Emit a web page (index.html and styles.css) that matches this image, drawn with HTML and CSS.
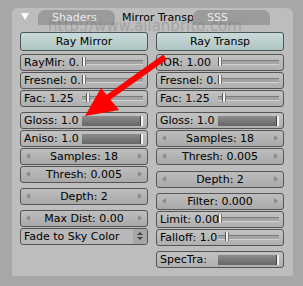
FILE: index.html
```html
<!DOCTYPE html>
<html>
<head>
    <title>Mirror Transp</title>
    <meta charset="UTF-8"/>
    <link rel="stylesheet" href="styles.css">
</head>
<body>
    <div class="panel">
        <div class="tabs">
            <span class="tri"></span>
            <div class="tab">Shaders</div>
            <div class="tab active">Mirror Transp</div>
            <div class="tab">SSS</div>
        </div>
        <div class="watermark">http://www.allanbrito.com</div>

        <div class="cols">
            <!-- coluna esquerda -->
            <div class="col">
                <div class="toggle">Ray Mirror</div>
                <div class="group">
                    <div class="row slider"><span class="lbl">RayMir: 0.</span><span class="track"><i class="knob" style="left:0px"></i></span></div>
                    <div class="row slider"><span class="lbl">Fresnel: 0.</span><span class="track"><i class="knob" style="left:0px"></i></span></div>
                    <div class="row slider"><span class="lbl">Fac: 1.25</span><span class="track"><i class="knob" style="left:4px"></i></span></div>
                </div>
                <div class="group">
                    <div class="row slider"><span class="lbl">Gloss: 1.0</span><span class="fill"><i class="end"></i></span></div>
                    <div class="row slider"><span class="lbl">Aniso: 1.0</span><span class="fill"><i class="end"></i></span></div>
                    <div class="row num">Samples: 18</div>
                    <div class="row num">Thresh: 0.005</div>
                </div>
                <div class="group">
                    <div class="row num">Depth: 2</div>
                </div>
                <div class="group">
                    <div class="row num">Max Dist: 0.00</div>
                    <div class="row menu"><span class="lbl">Fade to Sky Color</span><span class="updown"></span></div>
                </div>
            </div>

            <!-- coluna direita -->
            <div class="col">
                <div class="toggle">Ray Transp</div>
                <div class="group">
                    <div class="row slider"><span class="lbl">IOR: 1.00</span><span class="track"><i class="knob" style="left:0px"></i></span></div>
                    <div class="row slider"><span class="lbl">Fresnel: 0.</span><span class="track"><i class="knob" style="left:0px"></i></span></div>
                    <div class="row slider"><span class="lbl">Fac: 1.25</span><span class="track"><i class="knob" style="left:4px"></i></span></div>
                </div>
                <div class="group">
                    <div class="row slider"><span class="lbl">Gloss: 1.0</span><span class="fill"><i class="end"></i></span></div>
                    <div class="row num">Samples: 18</div>
                    <div class="row num">Thresh: 0.005</div>
                </div>
                <div class="group wide">
                    <div class="row num">Depth: 2</div>
                </div>
                <div class="group">
                    <div class="row num">Filter: 0.000</div>
                    <div class="row slider"><span class="lbl">Limit: 0.00</span><span class="track"><i class="knob" style="left:0px"></i></span></div>
                    <div class="row slider"><span class="lbl">Falloff: 1.0</span><span class="track"><i class="knob" style="left:7px"></i></span></div>
                </div>
                <div class="group">
                    <div class="row slider"><span class="lbl">SpecTra:</span><span class="fill"><i class="end"></i></span></div>
                </div>
            </div>
        </div>
    </div>

    <svg class="arrow" width="303" height="286" viewBox="0 0 303 286">
        <line x1="165" y1="57" x2="106" y2="99" stroke="#ff0000" stroke-width="6"/>
        <polygon points="85,116 101,88 119,110" fill="#ff0000"/>
    </svg>
</body>
</html>
```

FILE: styles.css
```css
body {
    margin: 0;
    background-color: #a7a7a7;
    font-family: "DejaVu Sans", sans-serif;
    font-size: 11px;
    color: #000;
}
.panel {
    position: relative;
    margin: 8px 0 0 12px;
    width: 281px;
    height: 268px;
    background-color: #bdbdbd;
    border-radius: 6px 6px 0 0;
}
.tabs {
    display: flex;
    align-items: flex-end;
    height: 17px;
}
.tri {
    align-self: flex-start;
    margin: 5px 9px 0 9px;
    width: 0;
    height: 0;
    border-left: 4px solid transparent;
    border-right: 4px solid transparent;
    border-top: 7px solid #ffffff;
}
.tab {
    width: 77px;
    height: 15px;
    box-sizing: border-box;
    padding-left: 14px;
    line-height: 15px;
    background-color: #9b9b9b;
    color: #ececec;
    border-radius: 7px 7px 0 0;
    white-space: nowrap;
    overflow: hidden;
}
.tab.active {
    width: 78px;
    height: 17px;
    padding-left: 7px;
    line-height: 19px;
    background-color: #bdbdbd;
    color: #000;
}
.watermark {
    position: absolute;
    left: 36px;
    top: 9px;
    font-size: 15px;
    color: rgba(110, 110, 110, 0.35);
    white-space: nowrap;
}
.cols {
    position: relative;
    z-index: 1;
    display: flex;
    gap: 8px;
    padding: 7px 0 0 8px;
}
.col {
    width: 128px;
    display: flex;
    flex-direction: column;
}
.toggle {
    height: 19px;
    box-sizing: border-box;
    border: 1px solid #4b5656;
    border-radius: 3px;
    background: linear-gradient(#c8dada, #b1c5c5);
    text-align: center;
    line-height: 17px;
    margin-bottom: 3px;
}
.group {
    display: flex;
    flex-direction: column;
    gap: 1px;
    margin-bottom: 5px;
}
.group.wide {
    margin-top: 1px;
}
.row {
    position: relative;
    height: 17px;
    box-sizing: border-box;
    border: 1px solid #555555;
    border-radius: 3px;
    background: linear-gradient(#c2c2c2, #afafaf);
    line-height: 15px;
    white-space: nowrap;
}
.slider {
    display: flex;
    align-items: center;
}
.lbl {
    padding-left: 3px;
    width: 58px;
    flex: none;
}
.track {
    position: relative;
    flex: 1;
    margin-right: 4px;
    height: 3px;
    background-color: #a3a3a3;
    border-top: 1px solid #7c7c7c;
    border-bottom: 1px solid #d2d2d2;
}
.knob {
    position: absolute;
    top: -4px;
    width: 2px;
    height: 9px;
    background-color: #f0f0f0;
    border-left: 1px solid #555555;
    border-right: 1px solid #777777;
}
.fill {
    position: relative;
    flex: 1;
    margin-right: 4px;
    height: 10px;
    background: linear-gradient(#8c8c8c, #666666);
}
.end {
    position: absolute;
    right: 0;
    top: 0;
    width: 2px;
    height: 10px;
    background-color: #f2f2f2;
    border-left: 1px solid #444444;
}
.num {
    text-align: center;
    background: linear-gradient(#bdbdbd, #a9a9a9);
}
.num::before,
.num::after {
    content: "";
    position: absolute;
    top: 4px;
    width: 0;
    height: 0;
    border-top: 3px solid transparent;
    border-bottom: 3px solid transparent;
}
.num::before {
    left: 5px;
    border-right: 4px solid #8a8a8a;
}
.num::after {
    right: 5px;
    border-left: 4px solid #8a8a8a;
}
.menu {
    display: flex;
    background: #b8b8b8;
}
.menu .lbl {
    flex: 1;
}
.updown {
    position: relative;
    width: 14px;
    background-color: #a6a6a6;
    border-radius: 0 2px 2px 0;
}
.updown::before,
.updown::after {
    content: "";
    position: absolute;
    left: 4px;
    border-left: 3px solid transparent;
    border-right: 3px solid transparent;
}
.updown::before {
    top: 3px;
    border-bottom: 3px solid #444444;
}
.updown::after {
    top: 8px;
    border-top: 3px solid #444444;
}
.arrow {
    position: absolute;
    left: 0;
    top: 0;
    z-index: 2;
    pointer-events: none;
}
```
